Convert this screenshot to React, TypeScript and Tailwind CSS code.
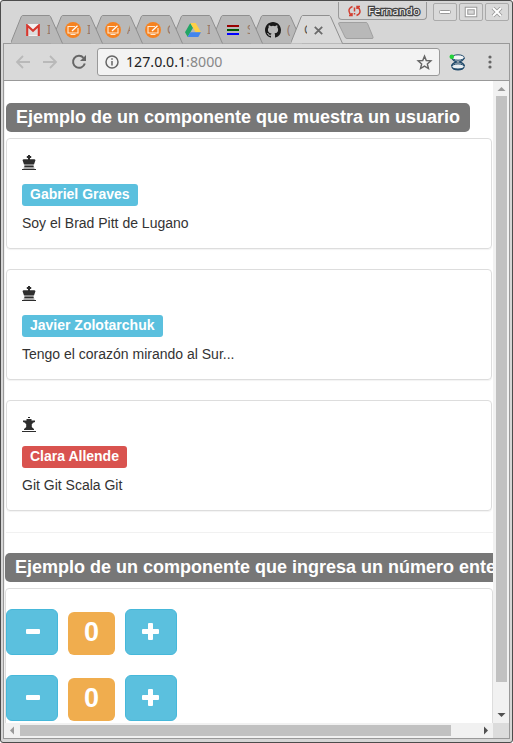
import React from "react";

const TabShape = ({ active }: { active?: boolean }) => (
  <svg className="absolute left-0 top-0" width="54" height="29" viewBox="0 0 54 29">
    <path
      d="M-.5 28.5 10.300 1.500 11.500.5H38.500L39.500 1.500 51.500 28.500"
      fill={active ? "#d9d9d9" : "#b8b8b8"}
      stroke="#8f8f8f"
    />
  </svg>
);

const Gmail = () => (
  <svg width="14" height="12" viewBox="0 0 14 12">
    <rect width="14" height="12" rx="1" fill="#f3f0f0" />
    <path d="M2.5 11V4L7 8l4.500-4v7z" fill="#ddd" />
    <path d="M1.200 12V1.500L7 6.700l5.800-5.200V12" fill="none" stroke="#d5382f" strokeWidth="2.200" />
  </svg>
);

const Board = () => (
  <svg width="16" height="16" viewBox="0 0 16 16">
    <circle cx="8" cy="8" r="8" fill="#f58220" />
    <path d="M10 4.500H3v6.500h10V6M5.500 12.500h5" fill="none" stroke="#ffe9d3" strokeWidth="1.100" />
    <path d="M7 9 12.500 3.800" fill="none" stroke="#fff" strokeWidth="1.300" />
  </svg>
);

const Drive = () => (
  <svg width="16" height="14" viewBox="0 0 16 14">
    <path d="M5.300 0 0 9.300 2.700 14 8 4.700z" fill="#22a565" />
    <path d="M5.300 0h5.400L16 9.300h-5.400z" fill="#ffcf45" />
    <path d="M5.400 9.300H16L13.300 14H2.700z" fill="#4285ee" />
  </svg>
);

const Stripes = () => (
  <svg width="12" height="10" viewBox="0 0 12 10">
    <path d="M0 0h12v2H0z" fill="#990000" />
    <path d="M0 4h12v2H0z" fill="#005500" />
    <path d="M0 8h12v2H0z" fill="#0000ff" />
  </svg>
);

const Github = () => (
  <svg width="16" height="16" viewBox="0 0 16 16" fill="#191919">
    <path d="M8 0C3.580 0 0 3.580 0 8c0 3.540 2.290 6.530 5.470 7.590.4.070.55-.17.55-.38 0-.19-.01-.82-.01-1.490-2.010.37-2.530-.49-2.690-.94-.09-.23-.48-.94-.82-1.130-.28-.15-.68-.52-.01-.53.63-.01 1.080.58 1.230.82.72 1.210 1.870.87 2.330.66.07-.52.28-.87.51-1.070-1.780-.2-3.640-.89-3.640-3.950 0-.87.31-1.590.82-2.150-.08-.2-.36-1.020.08-2.120 0 0 .67-.21 2.200.82a7.600 7.600 0 0 1 4 0c1.530-1.040 2.200-.82 2.200-.82.44 1.100.16 1.920.08 2.120.51.56.82 1.270.82 2.150 0 3.070-1.870 3.750-3.650 3.950.29.25.54.73.54 1.480 0 1.070-.01 1.930-.01 2.200 0 .21.15.46.55.38A8 8 0 0 0 16 8c0-4.420-3.580-8-8-8z" />
  </svg>
);

const tabs = [
  { icon: <Gmail />, text: "I", z: "z-[8]" },
  { icon: <Board />, text: "I", z: "z-[7]" },
  { icon: <Board />, text: "A", z: "z-[6]" },
  { icon: <Board />, text: "C", z: "z-[5]" },
  { icon: <Drive />, text: "I", z: "z-[4]" },
  { icon: <Stripes />, text: "S", z: "z-[3]" },
  { icon: <Github />, text: "(", z: "z-[2]" },
];

function WinButton({ children }: { children: React.ReactNode }) {
  return (
    <div className="flex h-[18px] w-6 shrink-0 items-center justify-center rounded-[2px] border border-[#aaa] bg-[#d9d9d9]">
      {children}
    </div>
  );
}

function TabStrip() {
  return (
    <div className="flex h-[42px] shrink-0 items-end pl-[10px]">
      {tabs.map((t, i) => (
        <div key={i} className={`relative h-7 w-10 shrink-0 ${t.z}`}>
          <TabShape />
          <div className="relative flex h-7 items-center pt-[2px]">
            <div className="ml-[14px] flex w-4 shrink-0 justify-center">{t.icon}</div>
            <div className="ml-[6px] w-[3px] overflow-hidden text-xs text-[#96786a]">{t.text}</div>
          </div>
        </div>
      ))}
      <div className="relative z-10 h-7 w-[47px] shrink-0">
        <TabShape active />
        <div className="relative flex h-7 items-center pt-[2px]">
          <div className="ml-[13px] w-[3px] overflow-hidden text-xs text-[#555]">C</div>
          <svg className="ml-[7px]" width="9" height="9" viewBox="0 0 9 9">
            <path d="M.8.8l7.400 7.400M8.200.8.8 8.200" stroke="#6b6b6b" strokeWidth="1.800" />
          </svg>
        </div>
      </div>
      <svg className="mb-[3px] shrink-0" width="36" height="18" viewBox="0 0 36 18">
        <path d="M1.500.5H28Q29 .5 29.500 1.500L35 15Q35.500 16.500 34 16.500H9Q7.500 16.500 7 15L.7 2Q.3.500 1.500.5z" fill="#b8b8b8" stroke="#a0a0a0" />
      </svg>
      <div className="-ml-[36px] flex h-full shrink-0 items-start">
        <div className="mt-px flex h-[18px] w-[89px] shrink-0 items-center rounded-b-[4px] border border-t-0 border-[#999] pl-[9px]">
          <svg width="13" height="12" viewBox="0 0 13 12" fill="none" stroke="#d23f31" strokeWidth="1.500">
            <path d="M4.500 1.500Q.8 3 1 6q.2 2.500 2.500 4M8.500 10.500Q12.200 9 12 6q-.2-2.500-2.500-4M1 10.500h3V8M12 1.500H9v2.500M6.500 2.500v4M6.500 8v1.500" />
          </svg>
          <span className="ml-[7px] text-[11.5px] leading-4 text-[#f4f4f4] [-webkit-text-stroke:2.5px_#444] [paint-order:stroke_fill]">
            Fernando
          </span>
        </div>
        <div className="ml-[6px] flex gap-[2px] pt-[2px]">
          <WinButton>
            <svg width="14" height="6"><rect x="1.500" y="1.500" width="11" height="3" rx="1" fill="#fff" stroke="#999" /></svg>
          </WinButton>
          <WinButton>
            <svg width="14" height="12" fill="none"><rect x="2.500" y="2.500" width="9" height="7" stroke="#999" strokeWidth="3.500" /><rect x="2.500" y="2.500" width="9" height="7" stroke="#fff" strokeWidth="1.500" /></svg>
          </WinButton>
          <WinButton>
            <svg width="12" height="12"><path d="M2 2l8 8M10 2l-8 8" stroke="#999" strokeWidth="3.800" /><path d="M2 2l8 8M10 2l-8 8" stroke="#fff" strokeWidth="2" /></svg>
          </WinButton>
        </div>
      </div>
    </div>
  );
}

function Toolbar() {
  return (
    <div className="mx-[2px] flex h-[38px] shrink-0 items-center border border-[#999] bg-[#d9d9d9] pl-[11px]">
      <svg width="16" height="14" viewBox="0 0 16 14" fill="none" stroke="#b9b9b9" strokeWidth="1.800"><path d="M15 7H2M8 1 2 7l6 6" /></svg>
      <svg className="ml-[12px]" width="16" height="14" viewBox="0 0 16 14" fill="none" stroke="#b9b9b9" strokeWidth="1.800"><path d="M0 7h13M7 1l6 6-6 6" /></svg>
      <svg className="ml-[12px] mr-px" width="16" height="16" viewBox="0 0 16 16">
        <path d="M12.500 3.800A6 6 0 1 0 13.800 9.500" fill="none" stroke="#666" strokeWidth="2" /><path d="M15 1v6H9z" fill="#666" />
      </svg>
      <div className="ml-[9px] flex h-7 w-[343px] items-center rounded-[3px] border border-[#999] bg-[#f3f3f3] pl-[7px] pr-[6px]">
        <svg width="14" height="14" viewBox="0 0 14 14" fill="none" stroke="#666" strokeWidth="1.500"><circle cx="7" cy="7" r="6" /><path d="M7 6v4.500M7 3.300v1.500" /></svg>
        <span className="ml-[7px] text-[14.2px] text-[#222]">127.0.0.1<span className="text-[#888]">:8000</span></span>
        <svg className="ml-auto" width="17" height="17" viewBox="0 0 24 24" fill="none" stroke="#666" strokeWidth="2"><path d="m12 3 2.500 6.200 6.500.5-5 4.300 1.600 6.500L12 17l-5.600 3.500L8 14 3 9.700l6.500-.5z" /></svg>
      </div>
      <svg className="ml-[9px]" width="17" height="17" viewBox="0 0 17 17">
        <path d="M2.500 4Q4 6.500 7.500 8q-4 1-5 4M15.500 4Q14 6.500 10.500 8q4 1 5 4" fill="none" stroke="#204a6b" strokeWidth="1.400" />
        <ellipse cx="9" cy="12.700" rx="6.200" ry="2.800" fill="#e8eef2" stroke="#204a6b" strokeWidth="1" />
        <path d="M2.500 13Q9 16 15.500 13 14.500 16.500 9 16.500T2.500 13z" fill="#204a6b" />
        <ellipse cx="9" cy="3.500" rx="6.200" ry="2.700" fill="#f3f5f7" stroke="#204a6b" strokeWidth="1" />
        <circle cx="2.800" cy="2.800" r="2.300" fill="#22d13a" />
      </svg>
      <svg className="ml-[22px]" width="4" height="14" fill="#666"><circle cx="2" cy="2" r="1.600" /><circle cx="2" cy="7" r="1.600" /><circle cx="2" cy="12" r="1.600" /></svg>
    </div>
  );
}

const King = () => (
  <svg width="14" height="16" viewBox="0 0 14 16" fill="#2d2d2d">
    <path d="M6 0h2v1h1.200v2H8v1.200h4.500L13.500 5 12 9.500H2L.5 5l1-.800H6V3H4.800V1H6zM2.300 10.500h9.400v2H2.300zM0 14h14v1H0z" />
    <path d="M3 9.500h8v1H3z" fill="#777" />
    <path d="M1.500 12.500h11V14h-11z" fill="#aaa" />
  </svg>
);

const Queen = () => (
  <svg width="14" height="16" viewBox="0 0 14 16" fill="#2d2d2d">
    <path d="M6 0h2v1H6zM4.500 2h5v1.500H13V5l-2.500 1v1H9.800v3l1 1 1.200 1v1H2v-1l1.200-1 1-1V7h-.700V6L1 5V3.500h3.500zM0 14h14v1H0z" />
  </svg>
);

const users = [
  { name: "Gabriel Graves", text: "Soy el Brad Pitt de Lugano", color: "bg-[#5bc0de]", icon: <King /> },
  { name: "Javier Zolotarchuk", text: "Tengo el corazón mirando al Sur...", color: "bg-[#5bc0de]", icon: <King /> },
  { name: "Clara Allende", text: "Git Git Scala Git", color: "bg-[#d9534f]", icon: <Queen /> },
];

function Counter() {
  return (
    <div className="flex h-[46px] items-end gap-[10px]">
      <button className="flex h-[46px] w-[52px] items-center justify-center rounded-[6px] border border-[#46b8da] bg-[#5bc0de]">
        <svg className="mb-[2px] ml-[2px]" width="14" height="5"><rect width="14" height="5" rx="1" fill="#fff" /></svg>
      </button>
      <div className="flex h-[43px] w-[47px] items-center justify-center rounded-[6px] bg-[#f0ad4e] pb-[3px] text-[27px] font-bold text-white">0</div>
      <button className="flex h-[46px] w-[52px] items-center justify-center rounded-[6px] border border-[#46b8da] bg-[#5bc0de]">
        <svg className="mb-px mr-px" width="17" height="17" fill="#fff"><rect y="6" width="17" height="5" rx="1" /><rect x="6" width="5" height="17" rx="1" /></svg>
      </button>
    </div>
  );
}

function Page() {
  return (
    <div className="h-full w-[488px] overflow-hidden bg-white pt-[22px] font-['Liberation_Sans',Arial,sans-serif] text-[#333]">
      <div className="ml-px flex h-[29px] w-[464px] items-center whitespace-nowrap rounded-[5px] bg-[#777] pb-[2px] pl-[10px] text-lg font-bold text-white">
        Ejemplo de un componente que muestra un usuario
      </div>
      <div className="ml-px mt-[6px] flex w-[486px] flex-col gap-5">
        {users.map((u) => (
          <div key={u.name} className="flex h-[111px] flex-col items-start rounded border border-[#ddd] pl-[15px] pt-[16px] shadow-[0_1px_1px_rgba(0,0,0,0.05)]">
            {u.icon}
            <div className={`mt-[13px] flex h-[22px] items-center rounded-[3px] px-2 pb-px text-[14px] font-bold text-white ${u.color}`}>{u.name}</div>
            <p className="mt-[7px] text-sm">{u.text}</p>
          </div>
        ))}
      </div>
      <div className="ml-px mt-[21px] h-px bg-[#f1f1f1]" />
      <div className="mt-[20px] flex h-[29px] w-[600px] items-center whitespace-nowrap rounded-[5px] bg-[#777] pb-[2px] pl-[10px] text-lg font-bold text-white">
        Ejemplo de un componente que ingresa un número entero
      </div>
      <div className="mt-[6px] flex h-[160px] flex-col gap-5 rounded border border-[#ddd] pt-5">
        <Counter />
        <Counter />
      </div>
    </div>
  );
}

export default function App() {
  return (
    <div className="flex h-[743px] w-[513px] flex-col overflow-hidden rounded-[3px] border border-[#4c4c4c] bg-[#d6d6d6] font-['Noto_Sans',sans-serif]">
      <TabStrip />
      <Toolbar />
      <div className="mx-[2px] mb-[2px] flex h-[658px] shrink-0 flex-col border border-t-0 border-[#999] bg-[#f1f1f1] pl-px">
        <div className="flex h-[642px]">
          <Page />
          <div className="flex flex-1 flex-col items-center">
            <svg width="15" height="15"><path d="M3.500 10h8l-4-4z" fill="#999" /></svg>
            <div className="h-[586px] w-[11px] bg-[#c1c1c1]" />
            <svg className="mt-auto" width="15" height="15"><path d="M3.500 5h8l-4 4z" fill="#505050" /></svg>
          </div>
        </div>
        <div className="flex h-[15px] items-center">
          <svg width="15" height="15"><path d="M9 3.500v8l-4-4z" fill="#999" /></svg>
          <div className="h-[11px] w-[431px] bg-[#c1c1c1]" />
          <svg className="ml-[27px]" width="15" height="15"><path d="M6 3.500v8l4-4z" fill="#505050" /></svg>
          <div className="h-[15px] flex-1 bg-[#dcdcdc]" />
        </div>
      </div>
    </div>
  );
}
